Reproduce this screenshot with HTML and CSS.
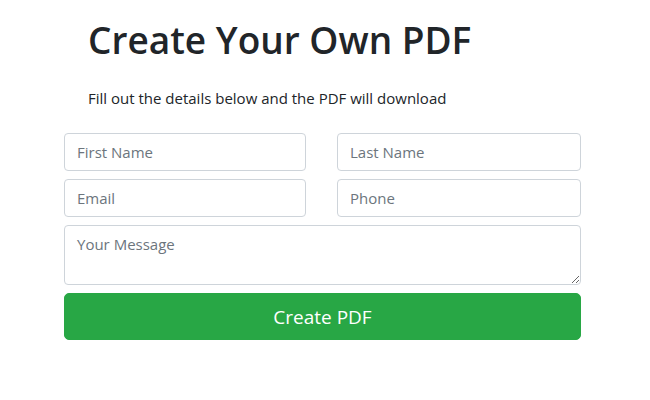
FILE: index.html
```html
<!DOCTYPE html>
<html>
<head>
<meta charset="utf-8">
<link rel="stylesheet" href="styles.css">
</head>
<body>
<div class="page">
  <div class="intro">
    <h1 class="title">Create Your Own PDF</h1>
    <p class="lead">Fill out the details below and the PDF will download</p>
  </div>
  <form class="form">
    <div class="row">
      <input class="field" type="text" placeholder="First Name">
      <input class="field" type="text" placeholder="Last Name">
    </div>
    <div class="row">
      <input class="field" type="text" placeholder="Email">
      <input class="field" type="text" placeholder="Phone">
    </div>
    <textarea class="field message" placeholder="Your Message"></textarea>
    <button class="btn" type="button">Create PDF</button>
  </form>
</div>
</body>
</html>
```
FILE: styles.css
```css
* { box-sizing: border-box; }
html, body { margin: 0; padding: 0; background: #fff; }
body {
  font-family: "Open Sans", "Noto Sans", sans-serif;
  color: #212529;
}
.page { padding-top: 18px; }
.intro { padding-left: 88px; }
.title {
  margin: 0;
  font-size: 37px;
  font-weight: 600;
  line-height: 1.2;
  color: #212529;
}
.lead {
  margin: 24px 0 0;
  font-size: 15px;
  line-height: 24px;
}
.form {
  margin: 23px 0 0 64px;
  width: 517px;
  display: flex;
  flex-direction: column;
  gap: 8px;
}
.row {
  display: grid;
  grid-template-columns: 242px 244px;
  column-gap: 31px;
}
.field {
  display: block;
  width: 100%;
  height: 38px;
  padding: 6px 12px;
  border: 1px solid #ced4da;
  border-radius: 4px;
  font-family: inherit;
  font-size: 15px;
  line-height: 24px;
  color: #495057;
  background: #fff;
  outline: none;
}
.field::placeholder { color: #6c757d; opacity: 1; }
.message { height: 60px; resize: vertical; }
.btn {
  display: block;
  width: 100%;
  height: 47px;
  border: 1px solid #28a745;
  border-radius: 5px;
  background: #28a745;
  color: #fff;
  font-family: inherit;
  font-size: 19px;
  line-height: 28px;
  padding: 0;
}
```
